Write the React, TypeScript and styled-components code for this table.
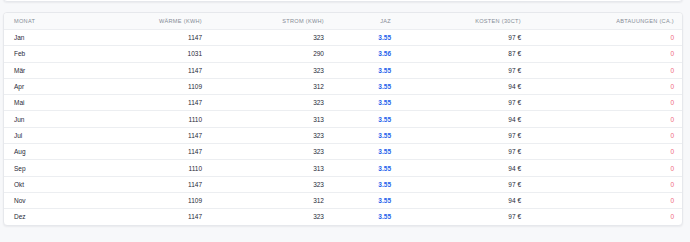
import React from 'react'
import styled, { createGlobalStyle } from 'styled-components'

const GlobalStyle = createGlobalStyle`
  html, body {
    margin: 0;
    padding: 0;
    background: #f7f8fa;
    font-family: 'Liberation Sans', Arial, sans-serif;
  }
`

const Page = styled.div`
  display: flex;
  flex-direction: column;
  gap: 10px;
  padding: 0 7px 0 3px;
  width: 690px;
  height: 242px;
  box-sizing: border-box;
  overflow: hidden;
`

const Card = styled.div`
  background: #ffffff;
  border: 1px solid #e6e8ec;
  border-radius: 4px;
  box-shadow: 0 1px 2px rgba(16, 24, 40, 0.06);
  overflow: hidden;
`

const PrevCard = styled(Card)`
  height: 40px;
  margin-top: -40px;
  flex-shrink: 0;
`

const Table = styled.table`
  width: 100%;
  border-collapse: collapse;
  table-layout: fixed;
`

const HeadCell = styled.th<{ $align?: 'left' | 'right' }>`
  height: 16px;
  padding: 0 10px;
  background: #f9fafb;
  border-bottom: 1px solid #eceef1;
  color: #868c96;
  font-size: 5.6px;
  font-weight: 400;
  letter-spacing: 0.3px;
  text-transform: uppercase;
  text-align: ${({ $align }) => $align || 'left'};
`

const Row = styled.tr`
  & + & td {
    border-top: 1px solid #eceef1;
  }
`

type Tone = 'default' | 'jaz' | 'zero'

const Cell = styled.td<{ $align?: 'left' | 'right'; $tone?: Tone }>`
  height: 15.3px;
  padding: 0 10px;
  font-size: 6.5px;
  text-align: ${({ $align }) => $align || 'left'};
  color: ${({ $tone }) =>
    $tone === 'jaz' ? '#2563eb' : $tone === 'zero' ? '#f06a7e' : '#1f2937'};
  font-weight: ${({ $tone }) => ($tone === 'jaz' ? 700 : 400)};
`

const columns = [
  { label: 'Monat', width: 104, align: 'left' as const },
  { label: 'Wärme (kWh)', width: 104, align: 'right' as const },
  { label: 'Strom (kWh)', width: 122, align: 'right' as const },
  { label: 'JAZ', width: 67, align: 'right' as const },
  { label: 'Kosten (30ct)', width: 130, align: 'right' as const },
  { label: 'Abtauungen (ca.)', width: 153, align: 'right' as const },
]

const months: [string, number, number, string, number][] = [
  ['Jan', 1147, 323, '3.55', 97],
  ['Feb', 1031, 290, '3.56', 87],
  ['Mär', 1147, 323, '3.55', 97],
  ['Apr', 1109, 312, '3.55', 94],
  ['Mai', 1147, 323, '3.55', 97],
  ['Jun', 1110, 313, '3.55', 94],
  ['Jul', 1147, 323, '3.55', 97],
  ['Aug', 1147, 323, '3.55', 97],
  ['Sep', 1110, 313, '3.55', 94],
  ['Okt', 1147, 323, '3.55', 97],
  ['Nov', 1109, 312, '3.55', 94],
  ['Dez', 1147, 323, '3.55', 97],
]

export default function App() {
  return (
    <>
      <GlobalStyle />
      <Page>
        <PrevCard />
        <Card>
          <Table>
            <colgroup>
              {columns.map((c) => (
                <col key={c.label} style={{ width: c.width }} />
              ))}
            </colgroup>
            <thead>
              <tr>
                {columns.map((c) => (
                  <HeadCell key={c.label} $align={c.align}>
                    {c.label}
                  </HeadCell>
                ))}
              </tr>
            </thead>
            <tbody>
              {months.map(([month, heat, power, jaz, cost]) => (
                <Row key={month}>
                  <Cell>{month}</Cell>
                  <Cell $align="right">{heat}</Cell>
                  <Cell $align="right">{power}</Cell>
                  <Cell $align="right" $tone="jaz">
                    {jaz}
                  </Cell>
                  <Cell $align="right">{cost} €</Cell>
                  <Cell $align="right" $tone="zero">
                    0
                  </Cell>
                </Row>
              ))}
            </tbody>
          </Table>
        </Card>
      </Page>
    </>
  )
}
